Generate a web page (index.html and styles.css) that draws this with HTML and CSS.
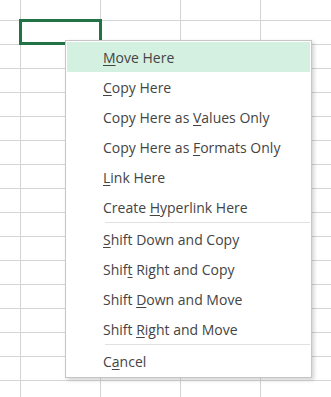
FILE: index.html
```html
<!DOCTYPE html>
<html>
<head>
<meta charset="utf-8">
<link rel="stylesheet" href="styles.css">
</head>
<body>
<div class="sheet">
  <div class="selection"></div>
  <div class="menu">
    <div class="item active"><u>M</u>ove Here</div>
    <div class="item"><u>C</u>opy Here</div>
    <div class="item">Copy Here as <u>V</u>alues Only</div>
    <div class="item">Copy Here as <u>F</u>ormats Only</div>
    <div class="item"><u>L</u>ink Here</div>
    <div class="item">Create <u>H</u>yperlink Here</div>
    <div class="sep"></div>
    <div class="item"><u>S</u>hift Down and Copy</div>
    <div class="item">Shif<u>t</u> Right and Copy</div>
    <div class="item">Shift <u>D</u>own and Move</div>
    <div class="item">Shift <u>R</u>ight and Move</div>
    <div class="sep"></div>
    <div class="item">C<u>a</u>ncel</div>
  </div>
</div>
</body>
</html>
```
FILE: styles.css
```css
html, body {
  margin: 0;
  padding: 0;
}
body {
  width: 331px;
  height: 397px;
  overflow: hidden;
  background-color: #ffffff;
  background-image:
    linear-gradient(to right, #d4d4d4 1px, transparent 1px),
    linear-gradient(to bottom, #d4d4d4 1px, transparent 1px);
  background-size: 80px 24px;
  background-position: 20px 20px;
}
.sheet {
  position: relative;
  width: 331px;
  height: 397px;
}
.selection {
  position: absolute;
  left: 19px;
  top: 19px;
  width: 83px;
  height: 26px;
  box-sizing: border-box;
  border: 3px solid #217346;
}
.menu {
  position: absolute;
  left: 65px;
  top: 40px;
  width: 247px;
  box-sizing: border-box;
  border: 1px solid #c6c6c6;
  padding: 1px;
  background: #ffffff;
  box-shadow: 2px 2px 4px rgba(0, 0, 0, 0.18);
  font-family: "Open Sans", "Noto Sans", sans-serif;
  font-size: 14px;
  color: #444444;
}
.item {
  height: 28px;
  padding-top: 2px;
  line-height: 28px;
  padding-left: 36px;
  white-space: nowrap;
}
.item.active {
  background: #d3f0e0;
}
.item u {
  text-decoration: underline;
  text-underline-offset: 2px;
}
.sep {
  height: 1px;
  background: #e1e1e1;
  margin: 0 0 1px 38px;
}
```
